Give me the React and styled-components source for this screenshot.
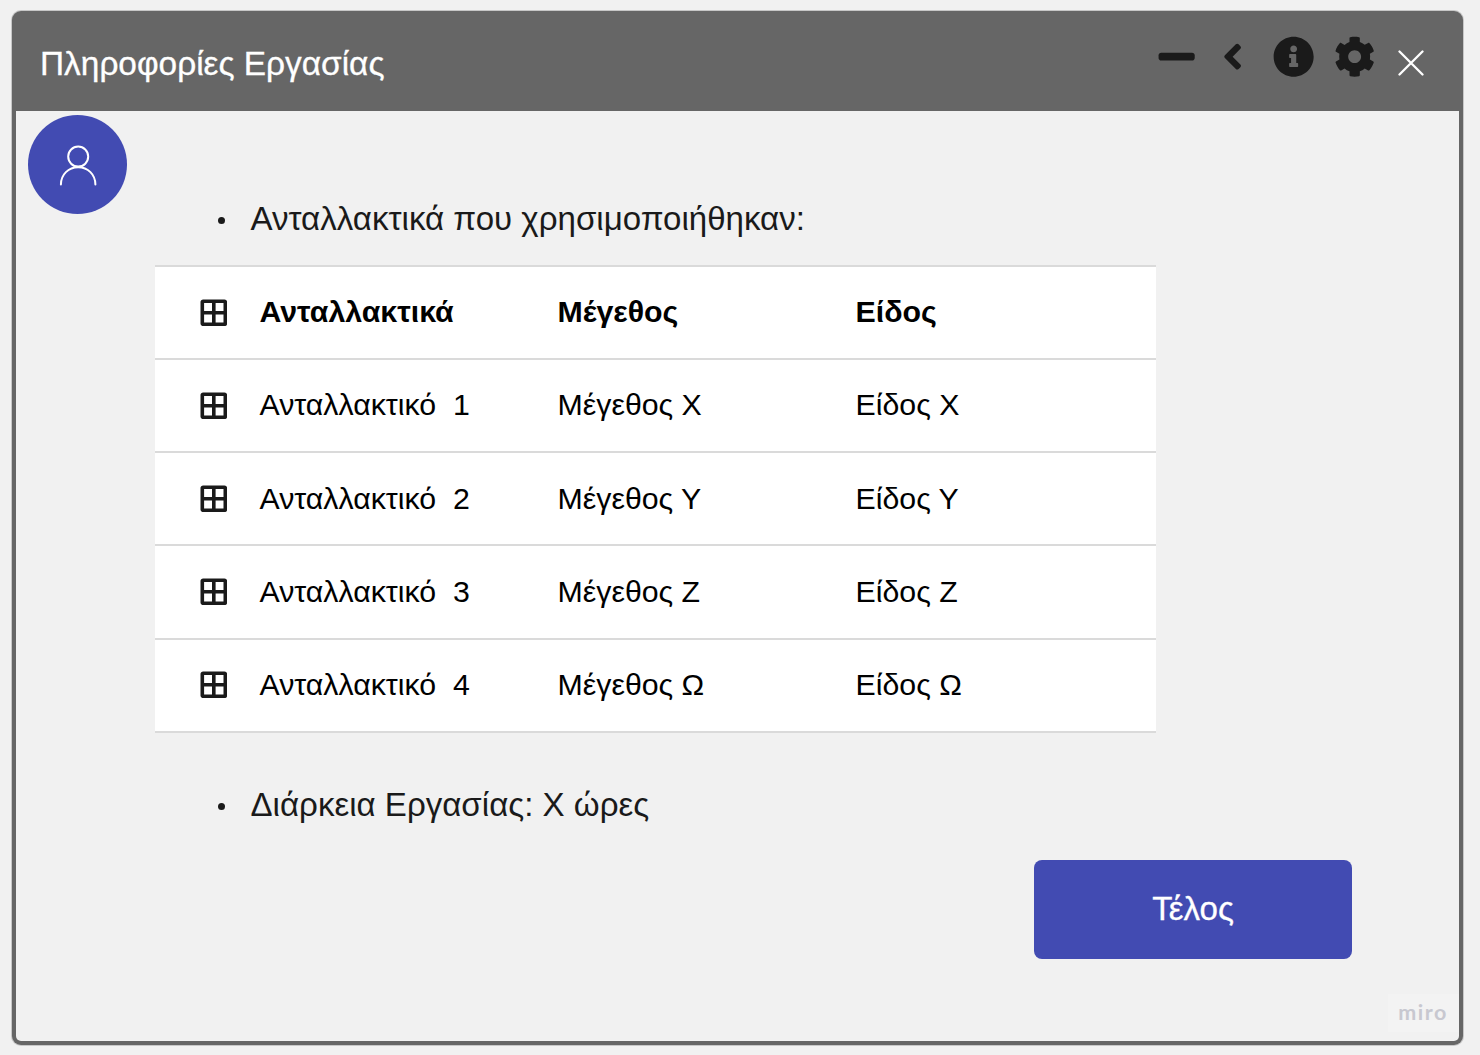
import React from "react";
import styled, { createGlobalStyle } from "styled-components";
import { FaMinus, FaAngleLeft, FaInfoCircle, FaCog } from "react-icons/fa";

const GlobalStyle = createGlobalStyle`
  *, *::before, *::after { box-sizing: border-box; }
  body {
    margin: 0;
    background: #f1f1f1;
    font-family: "Liberation Sans", Arial, sans-serif;
  }
`;

const Page = styled.div`
  height: 1055px;
  padding: 11px 17px 10px 12px;
  overflow: hidden;
`;

const Window = styled.main`
  display: flex;
  flex-direction: column;
  height: 100%;
  padding: 0 4px 4px;
  border-radius: 9px;
  background: #666;
  box-shadow: 0 0 0 1px rgba(102, 102, 102, 0.3);
`;

const TitleBar = styled.header`
  display: flex;
  flex: none;
  justify-content: space-between;
  height: 100px;
  padding: 0 35.5px 0 24px;
`;

const Title = styled.h1`
  margin: 0;
  padding-top: 32.5px;
  color: #fff;
  font-size: 33.4px;
  font-weight: 400;
  line-height: 40px;
  white-space: nowrap;
  -webkit-text-stroke: 0.3px #fff;
`;

const Controls = styled.nav`
  display: flex;
  align-items: flex-start;
  padding-top: 25.5px;
`;

const Control = styled.button`
  display: flex;
  align-items: center;
  justify-content: center;
  width: ${(p) => p.$width}px;
  height: 41px;
  margin: ${(p) => p.$drop || 0}px 0 0 ${(p) => p.$gap || 0}px;
  padding: 0;
  border: 0;
  background: none;
  color: ${(p) => p.$color || "#1a1a1a"};
  font-size: 41.3px;

  svg { flex: none; }
`;

const Body = styled.div`
  display: grid;
  grid-template-columns: 139px 1fr;
  flex: 1;
  border-radius: 0 0 5px 5px;
  background: #f1f1f1;
`;

const Avatar = styled.div`
  display: flex;
  align-items: center;
  justify-content: center;
  width: 99px;
  height: 99px;
  margin: 4.4px 0 0 12px;
  border-radius: 50%;
  background: #424bb2;
`;

const Content = styled.section`
  display: flex;
  flex-direction: column;
  align-items: flex-start;
  padding-top: 87.5px;
`;

const Point = styled.div`
  display: flex;
  align-items: center;
  gap: 26px;
  height: 40px;
  margin-left: 62.5px;
  color: #1a1a1a;
  font-size: 33.08px;
  line-height: 40px;
  white-space: nowrap;
`;

const Dot = styled.i`
  width: 7px;
  height: 7px;
  margin-top: 4px;
  border-radius: 50%;
  background: #1a1a1a;
`;

const Table = styled.div`
  width: 1001px;
  margin: 26.5px 0 52px;
  border-top: 2px solid #dadada;
  background: #fff;
`;

const Row = styled.div`
  display: grid;
  grid-template-columns: 59.5px 298px 298px 1fr;
  align-items: center;
  height: 93.15px;
  padding-left: 45px;
  border-bottom: 2px solid #dadada;
  color: #000;
  font-size: 30.3px;
  font-weight: ${(p) => (p.$head ? 700 : 400)};
  line-height: 40px;

  svg { margin-bottom: 0.8px; }
`;

const Cell = styled.span`
  padding-bottom: 0.7px;
  white-space: pre;
`;

const Actions = styled.footer`
  align-self: flex-end;
  display: flex;
  flex-direction: column;
  align-items: flex-end;
  margin-top: 35.5px;
`;

const FinishButton = styled.button`
  width: 318px;
  height: 99px;
  margin-right: 107px;
  padding: 0 0 2px;
  border: 0;
  border-radius: 8px;
  background: #424bb2;
  color: #fff;
  font: 400 33.1px "Liberation Sans", Arial, sans-serif;
  -webkit-text-stroke: 0.3px #fff;
`;

const Brand = styled.div`
  width: 71px;
  height: 38px;
  margin-top: 35px;
  padding-right: 1px;
  background: #f3f3f3;
  color: #c8c8d0;
  font: 700 21.5px/37px Lato, sans-serif;
  letter-spacing: 1.5px;
  text-align: center;
`;

const GridIcon = () => (
  <svg width="27" height="27" viewBox="0 0 27 27" fill="none" stroke="#1a1a1a" strokeWidth="3.6">
    <rect x="2.3" y="2.3" width="23" height="23" rx="0.8" />
    <path d="M13.8 2v23.5M2 13.8h23.5" />
  </svg>
);

const UserIcon = () => (
  <svg width="40" height="44" viewBox="0 0 40 44" fill="none" stroke="#fff" strokeWidth="2" strokeLinecap="round">
    <circle cx="20.2" cy="13.6" r="10" />
    <path d="M2.9 41.6C2.9 31.6 10.5 24.2 20.2 24.2S37.4 31.6 37.4 41.6" />
  </svg>
);

const CloseIcon = () => (
  <svg width="26" height="26" viewBox="0 0 26 26" fill="none" stroke="#fff" strokeWidth="2.3" strokeLinecap="round">
    <path d="M1.5 1.5l23 23M24.5 1.5l-23 23" />
  </svg>
);

const rows = [
  ["Ανταλλακτικά", "Μέγεθος", "Είδος"],
  ["Ανταλλακτικό  1", "Μέγεθος Χ", "Είδος Χ"],
  ["Ανταλλακτικό  2", "Μέγεθος Υ", "Είδος Υ"],
  ["Ανταλλακτικό  3", "Μέγεθος Ζ", "Είδος Ζ"],
  ["Ανταλλακτικό  4", "Μέγεθος Ω", "Είδος Ω"],
];

export default function App() {
  return (
    <Page>
      <GlobalStyle />
      <Window>
        <TitleBar>
          <Title>Πληροφορίες Εργασίας</Title>
          <Controls>
            <Control $width={37}><FaMinus /></Control>
            <Control $width={20} $gap={27.5}><FaAngleLeft /></Control>
            <Control $width={41} $gap={30.6}><FaInfoCircle /></Control>
            <Control $width={41} $gap={19.9}><FaCog /></Control>
            <Control $width={26} $gap={22.5} $drop={6} $color="#fff"><CloseIcon /></Control>
          </Controls>
        </TitleBar>
        <Body>
          <Avatar><UserIcon /></Avatar>
          <Content>
            <Point><Dot />Ανταλλακτικά που χρησιμοποιήθηκαν:</Point>
            <Table>
              {rows.map((cells, i) => (
                <Row key={i} $head={i === 0}>
                  <GridIcon />
                  {cells.map((text) => <Cell key={text}>{text}</Cell>)}
                </Row>
              ))}
            </Table>
            <Point><Dot />Διάρκεια Εργασίας: Χ ώρες</Point>
            <Actions>
              <FinishButton>Τέλος</FinishButton>
              <Brand>miro</Brand>
            </Actions>
          </Content>
        </Body>
      </Window>
    </Page>
  );
}
